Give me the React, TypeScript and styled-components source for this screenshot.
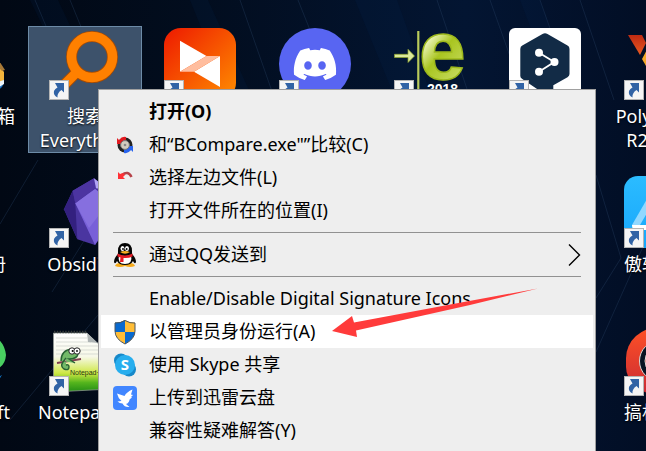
import React from "react";
import styled, { createGlobalStyle, css } from "styled-components";
import { FaDiscord } from "react-icons/fa";

const GlobalStyle = createGlobalStyle`
  *, *::before, *::after { box-sizing: border-box; }
  html, body { margin: 0; height: 100%; overflow: hidden; }
  #root { height: 100%; }
  button { font: inherit; color: inherit; }
`;

const Desktop = styled.main`
  position: relative;
  height: 100vh;
  overflow: hidden;
  font-family: "Noto Sans", "Noto Sans CJK SC", sans-serif;
  font-size: 18px;
  background: linear-gradient(90deg, #010814 0%, #020d1e 30%, #031532 72%, #020e25 100%);
`;

const Wallpaper = styled.svg`
  position: absolute;
  inset: 0;
  width: 100%;
  height: 100%;
`;

const IconGrid = styled.div`
  position: relative;
  display: grid;
  grid-template-columns: repeat(7, 115px);
  grid-auto-rows: 148px;
  margin: 26px 0 0 -87px;
`;

const Tile = styled.button<{ $column: number; $row: number; $selected?: boolean }>`
  grid-column: ${(p) => p.$column};
  grid-row: ${(p) => p.$row};
  place-self: start;
  display: flex;
  flex-direction: column;
  align-items: center;
  gap: 4px;
  width: 114px;
  padding: 1px 0 0;
  border: 1px solid transparent;
  background: none;
  ${(p) =>
    p.$selected &&
    css`
      border-color: #6d8ba7;
      background: #3d526b;
    `}
`;

const Picture = styled.span`
  position: relative;
  display: block;
  width: 72px;
  height: 72px;
  svg { display: block; }
`;

const ShortcutBadge = styled.span`
  position: absolute;
  left: 0;
  bottom: 0;
`;

const Label = styled.span`
  width: 112px;
  line-height: 24px;
  color: #fff;
  text-align: center;
  white-space: pre-line;
  text-shadow: 0 1px 2px #000;
`;

const Menu = styled.div`
  position: absolute;
  top: 89px;
  left: 98px;
  right: 50px;
  bottom: -8px;
  padding: 5px 2px;
  border: 1px solid #a0a0a0;
  background: #eee;
  color: #000;
`;

const Item = styled.button<{ $active?: boolean; $bold?: boolean }>`
  display: grid;
  grid-template-columns: 48px 1fr auto;
  align-items: center;
  width: 100%;
  height: 33px;
  padding: 0 12px 0 0;
  border: 0;
  background: ${(p) => (p.$active ? "#fff" : "transparent")};
  font-weight: ${(p) => (p.$bold ? 700 : 400)};
  line-height: 33px;
  text-align: left;
  white-space: nowrap;
`;

const ItemIcon = styled.span`
  display: flex;
  justify-content: center;
`;

const Separator = styled.hr`
  height: 1px;
  margin: 5px 12px;
  border: 0;
  background: #919191;
`;

const Pointer = styled.svg`
  position: absolute;
  left: 332px;
  top: 288px;
`;

const DiscordDisc = styled.span`
  display: flex;
  align-items: center;
  justify-content: center;
  width: 72px;
  height: 72px;
  border-radius: 50%;
  background: #5865f2;
  color: #fff;
`;

const Art = ({ children }: { children: React.ReactNode }) => (
  <svg width="72" height="72" viewBox="0 0 72 72" aria-hidden="true">{children}</svg>
);

const ShortcutArrow = () => (
  <ShortcutBadge>
    <svg width="20" height="20" viewBox="0 0 20 20" aria-hidden="true">
      <rect x=".5" y=".5" width="19" height="19" fill="#f5f5f5" stroke="#b4b4b4" />
      <path d="M6 3h9v9.500l-2.500-2.500Q8 13 8.500 17.500 4 15 5 11q1-2.500 3.500-3.500z" fill="#3163a5" />
    </svg>
  </ShortcutBadge>
);

const ToolboxArt = () => (
  <Art>
    <path d="M36 46h34v8q-2 8-8 8H36z" fill="#1c72c4" />
    <path d="M40 30 58 30 70 44v8l-10 6H40z" fill="#f3b43c" />
    <path d="m56 56 14-4v4l-10 6z" fill="#eef3f8" />
    <path d="m60 25 11 17-3 1-14-14z" fill="#a87937" />
  </Art>
);

const SearchArt = () => (
  <Art>
    <path d="M29 43 13 59" stroke="#a94b00" strokeWidth="11" />
    <circle cx="43" cy="29" r="20.5" fill="none" stroke="#a94b00" strokeWidth="11" />
    <path d="M29 43 13 59" stroke="#ff8000" strokeWidth="9.5" />
    <circle cx="43" cy="29" r="20.5" fill="none" stroke="#ff8000" strokeWidth="9.5" />
  </Art>
);

const RemoteArt = () => (
  <Art>
    <defs>
      <linearGradient id="remote" x1="0" y1="0" x2="1" y2="1">
        <stop stopColor="#ee1900" />
        <stop offset="1" stopColor="#ff8f00" />
      </linearGradient>
    </defs>
    <rect width="72" height="72" rx="17" fill="url(#remote)" />
    <path d="M16 12.7 42.5 28 16 43.7zM56 28v31L30 43.7z" fill="#fff" />
    <path d="M16 43.7 42.5 28H56L30 43.7z" fill="#ffbd9e" />
  </Art>
);

const EplanArt = () => (
  <Art>
    <defs>
      <linearGradient id="lime" x1="0" y1="0" x2="0.6" y2="1">
        <stop stopColor="#c4dc60" />
        <stop offset=".35" stopColor="#f2f8c8" />
        <stop offset=".6" stopColor="#a9c520" />
        <stop offset="1" stopColor="#c9dd65" />
      </linearGradient>
    </defs>
    <path d="M.5 26.3H14v-5l6.500 6.700L14 34.500v-5H.5z" fill="#dce99a" stroke="#8fa52a" strokeWidth=".7" />
    <path d="M24.300 3v69" stroke="#b9cb5b" strokeWidth="2.200" />
    <text x="25" y="51" fontFamily="Liberation Sans, sans-serif" fontWeight="700" fontSize="84" fill="url(#lime)" stroke="#9db81c" strokeWidth="1.500">e</text>
    <text x="33" y="66" fontFamily="Liberation Sans, sans-serif" fontWeight="700" fontSize="14" fill="#fff">2018</text>
  </Art>
);

const TranslateArt = () => (
  <Art>
    <rect width="72" height="72" rx="6" fill="#fff" />
    <path d="M33.500 6q2.500-1.500 5 0l20 11.600q2 1 2 3.400v25q0 2-2 3.200L44.300 57.300V72L13.300 51q-2-1-2-3V21q0-2.400 2-3.400z" fill="#122b46" />
    <path d="m30 24.700 15.300 9.300L30 43.700" fill="none" stroke="#fff" strokeWidth="1.800" />
    <g fill="#fff">
      <circle cx="30" cy="24.700" r="4" />
      <circle cx="45.500" cy="34" r="4" />
      <circle cx="30" cy="43.700" r="4" />
    </g>
  </Art>
);

const PolyArt = () => (
  <Art>
    <defs>
      <linearGradient id="poly" x1="0" y1="0" x2="0" y2="1">
        <stop stopColor="#bf2b12" />
        <stop offset="1" stopColor="#e75922" />
      </linearGradient>
    </defs>
    <path d="M4 7h14l4 8-6 12z" fill="url(#poly)" />
    <path d="m18 31 10-19h12L22 38z" fill="#f3a829" />
  </Art>
);

const ObsidianArt = () => (
  <Art>
    <path d="M45 2.300 23.700 14.700 15 33.300 28.300 63.300 46 69 60 50V14z" fill="#4a35a0" />
    <path d="M23.700 14.700 15 33.300l13.300 30-2-36z" fill="#33207f" />
    <path d="M26.300 27.300 46 13l14 10v24L46 69z" fill="#7860d8" />
    <path d="m26.300 27.300 20-14.300L60 26 40 52z" fill="#8b76e3" opacity=".7" />
    <path d="M26.300 27.300 23.700 14.700 45 2.300v10.400z" fill="#4c34a1" />
    <path d="m45 2.300 15 12-13-2z" fill="#b2a4f6" />
  </Art>
);

const AppArt = () => (
  <Art>
    <defs>
      <linearGradient id="app" x1="0" y1="0" x2="0" y2="1">
        <stop stopColor="#2bbcff" />
        <stop offset="1" stopColor="#18a6fb" />
      </linearGradient>
    </defs>
    <rect width="72" height="72" rx="14" fill="url(#app)" />
    <path d="m8 49 22-38h8L16 49z" fill="#91d8ff" />
    <path d="M8 49h50v5H11q-3 0-3-5z" fill="#fff" />
  </Art>
);

const EdgeArt = () => (
  <Art>
    <path d="M10 24A36 36 0 0 1 50 8q20 5 22 23-1 15-18 16H34z" fill="#49cf61" />
    <path d="M10 24q35-4 30 30 13 6 28-3Q52 78 25 67z" fill="#1478ca" />
  </Art>
);

const NotepadArt = () => (
  <Art>
    <defs>
      <linearGradient id="page" x1="0" y1="0" x2="0" y2="1">
        <stop stopColor="#fff" />
        <stop offset=".4" stopColor="#f7f8e8" />
        <stop offset=".68" stopColor="#cee844" />
        <stop offset=".84" stopColor="#55b51d" />
        <stop offset="1" stopColor="#228d16" />
      </linearGradient>
    </defs>
    <path d="M4.500 9H38l10 10h14v46l-57.500 3z" fill="url(#page)" stroke="#979d98" strokeWidth=".7" />
    <path d="M7 14h31M7 18h35M7 22h42M7 26h45M7 30h45" stroke="#cbd0ca" strokeWidth=".7" />
    <path d="m38 9 1 9 10 1z" fill="#aeb4b4" />
    <path d="M5 8h33" stroke="#383e3b" strokeWidth="2.500" strokeDasharray="1.400 1.400" />
    <path d="M8 39 32 35" stroke="#7e3d50" strokeWidth="1.800" />
    <path d="M12 37q0-11 11-12l6 5q-1 5-9 5l6 4M17 34l-3 4q-3 4 1 7 5 2 5-2 0-3-3-2" fill="#72b968" stroke="#276133" strokeWidth="1.400" />
    <circle cx="23" cy="27" r="3.200" fill="#fff" stroke="#222" />
    <circle cx="28" cy="27" r="3.200" fill="#fff" stroke="#222" />
    <circle cx="23.500" cy="27" r=".9" /><circle cx="28" cy="27" r=".9" />
    <text x="21" y="51" fontFamily="Liberation Sans, sans-serif" fontSize="7" fill="#263715">Notepad++</text>
  </Art>
);

const RingArt = () => (
  <Art>
    <defs>
      <linearGradient id="ring" x1="0" y1="0" x2="0" y2="1">
        <stop stopColor="#ff5126" />
        <stop offset="1" stopColor="#c92a34" />
      </linearGradient>
    </defs>
    <path d="M36 3a34 31 0 0 1 34 31v9a34 28 0 0 1-68 0v-9A34 31 0 0 1 36 3z" fill="url(#ring)" />
    <circle cx="36" cy="37" r="20.500" fill="#081322" stroke="#dad7d4" />
    <circle cx="36" cy="37" r="15" fill="#ee432f" stroke="#ddd" />
  </Art>
);

const CompareIcon = () => (
  <svg width="18" height="18" viewBox="0 0 18 18" aria-hidden="true">
    <circle cx="9" cy="9" r="7.500" fill="#222" />
    <path d="M1 2 3 4q3-4 7-3v4Q7 4 5.500 6L7 8H1z" fill="#e11a20" />
    <path d="M17 16 15 14q-3 4-7 3v-4q3 1 5-2l-2-1h6z" fill="#2864ef" />
    <circle cx="9" cy="9" r="4.400" fill="#d2cdbf" stroke="#777" />
    <circle cx="9" cy="9" r="1.300" fill="#888" />
  </svg>
);

const UndoIcon = () => (
  <svg width="16" height="16" viewBox="0 0 16 16" aria-hidden="true">
    <path d="M5 5q6-5 9.500 2" fill="none" stroke="#b64248" strokeWidth="2.500" />
    <path d="M1 2v7h7L6 7l2-2-2-2-3 1z" fill="#ff3035" />
  </svg>
);

const PenguinIcon = () => (
  <svg width="24" height="26" viewBox="0 0 24 26" aria-hidden="true">
    <path d="M2 24q1-3 5-3h10q4 0 5 3-5 2-10 0-5 2-10 0z" fill="#f6aa1a" />
    <path d="M5 9q0-8 7-8t7 8v3q4 4 4 8-1 3-3-1-2 4-8 4t-8-4q-2 4-3 1 0-4 4-8z" fill="#050505" />
    <path d="M6 13q6 2 12 0 2 9-6 9t-6-9z" fill="#fff" />
    <ellipse cx="9.500" cy="6.500" rx="2" ry="2.600" fill="#fff" /><ellipse cx="14" cy="6.500" rx="2" ry="2.600" fill="#fff" />
    <circle cx="10" cy="7" r=".9" /><circle cx="13.700" cy="7" r=".9" />
    <path d="M7 10q5-2 10 0-5 3.500-10 0z" fill="#f8af20" />
    <path d="M4.500 11.500q7.500 4 15 0v3q-4 2-9 1.500v4H7l.5-4.500-3-1z" fill="#e51b24" />
  </svg>
);

const ShieldIcon = () => (
  <svg width="24" height="26" viewBox="0 0 24 26" aria-hidden="true">
    <path d="M12 1q5 3 10 2.500V12q0 8-10 13Q2 20 2 12V3.500Q7 4 12 1z" fill="#ffbd36" />
    <path d="M12 1Q7 4 2 3.500V13h10zM12 13h10q-1 7-10 12z" fill="#0869cf" />
    <path d="M12 1.500q5 3 10 2.500v8q0 8-10 13Q2 20 2 12V4q5 .5 10-2.500z" fill="none" stroke="#4b5660" />
  </svg>
);

const SkypeIcon = () => (
  <svg width="24" height="24" viewBox="0 0 24 24" aria-hidden="true">
    <circle cx="8" cy="7.500" r="7" fill="#1688c9" /><circle cx="16" cy="16.500" r="7" fill="#1688c9" />
    <circle cx="12" cy="12" r="10" fill="#27aeee" />
    <text x="12" y="17" textAnchor="middle" fontFamily="Noto Sans, sans-serif" fontWeight="700" fontSize="15" fill="#fff">S</text>
  </svg>
);

const BirdIcon = () => (
  <svg width="24" height="24" viewBox="0 0 24 24" aria-hidden="true">
    <rect width="24" height="24" rx="4" fill="#4186ff" />
    <path d="M4 7.500 11.500 10q2-4 8-6.500L18 8.500l2 .5-2 2 1 .5q-3 1.500-3 4-1 2-3 2.500l3.500 3q-5 .5-7-3.500-3 0-5-2l4-.500Q5 12 4 7.500z" fill="#fff" />
  </svg>
);

const Chevron = () => (
  <svg width="13" height="22" viewBox="0 0 13 22" aria-hidden="true">
    <path d="m1 .500 10.500 10.500L1 21.500" fill="none" stroke="#000" strokeWidth="1.400" />
  </svg>
);

type ShortcutData = {
  column: number;
  row: number;
  name: string;
  label?: string;
  art: React.ReactNode;
  selected?: boolean;
};

const shortcuts: ShortcutData[] = [
  { column: 1, row: 1, name: "软件工具箱", label: "软件工具箱", art: <ToolboxArt /> },
  { column: 2, row: 1, name: "搜索 Everything", label: "搜索\nEverything", art: <SearchArt />, selected: true },
  { column: 3, row: 1, name: "BCompare", art: <RemoteArt /> },
  { column: 4, row: 1, name: "Discord", art: <DiscordDisc><FaDiscord size={46} /></DiscordDisc> },
  { column: 5, row: 1, name: "2018", art: <EplanArt /> },
  { column: 6, row: 1, name: "DeepL", art: <TranslateArt /> },
  { column: 7, row: 1, name: "PolyWorks", label: "PolyWorks\nR2 2018", art: <PolyArt /> },
  { column: 1, row: 2, name: "使用手册", label: "使用手册", art: null },
  { column: 2, row: 2, name: "Obsidian", label: "Obsidian", art: <ObsidianArt /> },
  { column: 7, row: 2, name: "傲软抠图", label: "傲软抠图", art: <AppArt /> },
  { column: 1, row: 3, name: "Microsoft", label: "Microsoft", art: <EdgeArt /> },
  { column: 2, row: 3, name: "Notepad++", label: "Notepad++", art: <NotepadArt /> },
  { column: 7, row: 3, name: "搞机助手", label: "搞机助手", art: <RingArt /> },
];

type Entry = { text: string; icon?: React.ReactNode; bold?: boolean; active?: boolean; submenu?: boolean };

const groups: Entry[][] = [
  [
    { text: "打开(O)", bold: true },
    { text: "和“BCompare.exe\"”比较(C)", icon: <CompareIcon /> },
    { text: "选择左边文件(L)", icon: <UndoIcon /> },
    { text: "打开文件所在的位置(I)" },
  ],
  [{ text: "通过QQ发送到", icon: <PenguinIcon />, submenu: true }],
  [
    { text: "Enable/Disable Digital Signature Icons" },
    { text: "以管理员身份运行(A)", icon: <ShieldIcon />, active: true },
    { text: "使用 Skype 共享", icon: <SkypeIcon /> },
    { text: "上传到迅雷云盘", icon: <BirdIcon /> },
    { text: "兼容性疑难解答(Y)" },
  ],
];

export default function App() {
  return (
    <Desktop>
      <GlobalStyle />
      <Wallpaper viewBox="0 0 646 451" preserveAspectRatio="xMidYMid slice" aria-hidden="true">
        <g fill="#0a2b59" opacity=".14">
          <path d="M30 0h28l80 170h-26zM190 0h18l50 110h-24zM355 0h42l43 120h-36zM520 0h20l40 110h-18z" />
        </g>
        <g fill="none" stroke="#2a4567" opacity=".35">
          <path d="m35 0 42 100M70 0l32 78M240 0l35 100M298 0l12 30M437 0l32 95M490 0l32 90M540 0l12 34M580 0l34 100M596 175l25 83-25 40M38 160 0 224M97 220 52 292M98 315 10 420M646 240l-50 112" />
        </g>
      </Wallpaper>
      <IconGrid>
        {shortcuts.map((s) => (
          <Tile key={s.name} $column={s.column} $row={s.row} $selected={s.selected} aria-label={s.name}>
            <Picture>
              {s.art}
              <ShortcutArrow />
            </Picture>
            {s.label && <Label>{s.label}</Label>}
          </Tile>
        ))}
      </IconGrid>
      <Menu role="menu">
        {groups.map((group, g) => (
          <React.Fragment key={g}>
            {g > 0 && <Separator />}
            {group.map((entry) => (
              <Item key={entry.text} role="menuitem" $active={entry.active} $bold={entry.bold}>
                <ItemIcon>{entry.icon}</ItemIcon>
                <span>{entry.text}</span>
                {entry.submenu && <Chevron />}
              </Item>
            ))}
          </React.Fragment>
        ))}
      </Menu>
      <Pointer width="208" height="50" viewBox="0 0 208 50" aria-hidden="true">
        <path d="M0 43 20 28l2 6.500L121 16 206 .5 138 17 24 42.500 25 49z" fill="#ff3b3b" />
      </Pointer>
    </Desktop>
  );
}
